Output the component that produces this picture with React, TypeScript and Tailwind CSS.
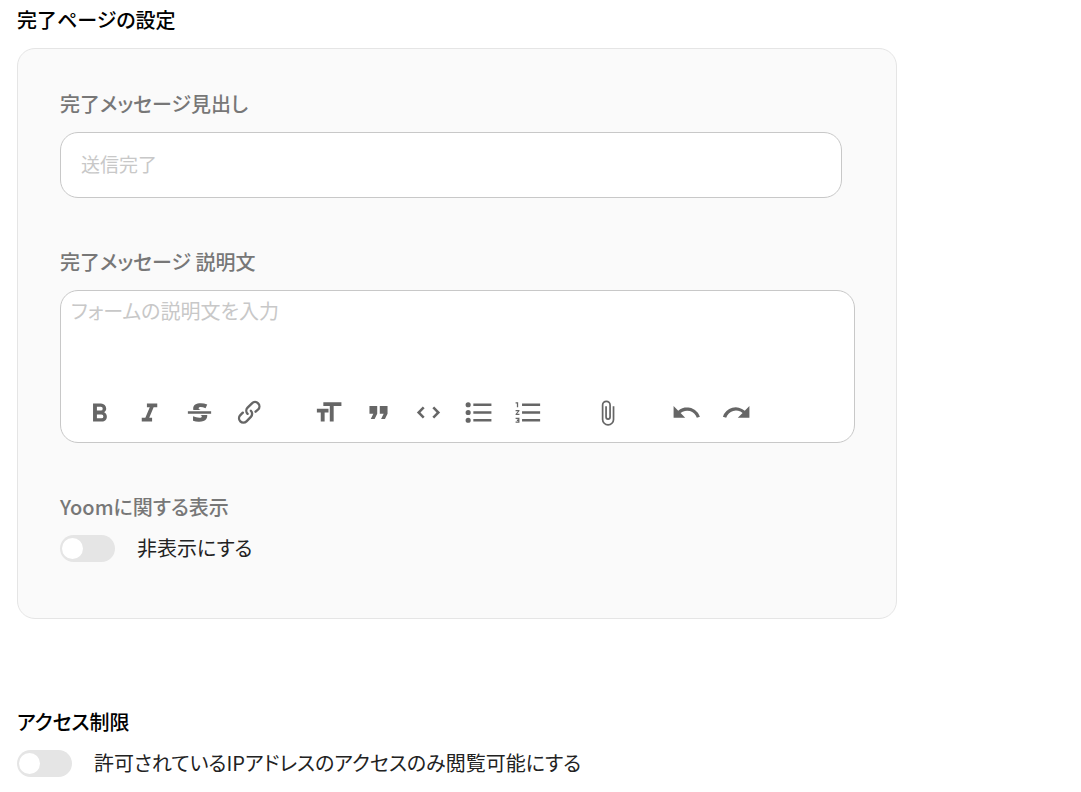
import { useId, useState } from "react"

const TOOL_GROUPS = [
  {
    name: "text",
    tools: [
      {
        label: "Bold",
        path: "M15.6 11.8c1-.7 1.6-1.8 1.6-2.8a4 4 0 0 0-4-4H7v14h7c2.1 0 3.7-1.7 3.7-3.8 0-1.5-.8-2.8-2.1-3.4zM10 7.5h3a1.5 1.5 0 1 1 0 3h-3v-3zm3.5 9H10v-3h3.5a1.5 1.5 0 1 1 0 3z",
      },
      { label: "Italic", path: "M10 5v3h2.2l-3.4 8H6v3h8v-3h-2.2l3.4-8H18V5h-8z" },
      {
        label: "Strikethrough",
        path: "M12.73 14l.28.14c.26.15.45.3.57.44.12.14.18.3.18.5 0 .3-.15.56-.44.75-.3.2-.76.3-1.39.3A13.52 13.52 0 0 1 7 14.95v3.37a10.64 10.64 0 0 0 4.84.88c1.26 0 2.35-.19 3.28-.56.93-.37 1.64-.9 2.14-1.57s.74-1.45.74-2.32c0-.26-.02-.51-.06-.75h-5.21zm-5.5-4c-.08-.34-.12-.7-.12-1.1 0-1.29.52-2.3 1.58-3.02 1.05-.72 2.5-1.08 4.34-1.08 1.62 0 3.28.34 4.97 1l-1.3 2.93c-1.47-.6-2.73-.9-3.8-.9-.55 0-.96.08-1.2.26-.26.17-.38.38-.38.64 0 .27.16.52.48.74.17.12.53.3 1.05.53H7.23zM3 13h18v-2H3v2z",
      },
      {
        label: "Link",
        path: "M9.88 13.7a4.3 4.3 0 0 1 0-6.07l3.37-3.37a4.26 4.26 0 0 1 6.07 0 4.3 4.3 0 0 1 0 6.06l-1.96 1.72a.91.91 0 1 1-1.3-1.3l1.97-1.71a2.46 2.46 0 0 0-3.48-3.48l-3.38 3.37a2.46 2.46 0 0 0 0 3.48.91.91 0 1 1-1.3 1.3zM4.25 19.46a4.3 4.3 0 0 1 0-6.07l1.93-1.9a.91.91 0 1 1 1.3 1.3l-1.93 1.9a2.46 2.46 0 0 0 3.48 3.48l3.37-3.38c.96-.96.96-2.52 0-3.48a.91.91 0 1 1 1.3-1.3 4.3 4.3 0 0 1 0 6.07l-3.38 3.38a4.26 4.26 0 0 1-6.07 0z",
      },
    ],
  },
  {
    name: "block",
    tools: [
      { label: "Heading", path: "M12 9v3H9v7H6v-7H3V9h9zM8 4h14v3h-6v12h-3V7H8V4z" },
      { label: "Quote", path: "M6 17h3l2-4V7H5v6h3zm8 0h3l2-4V7h-6v6h3z" },
      {
        label: "Code",
        path: "M18.2 12L15 15.2l1.4 1.4L21 12l-4.6-4.6L15 8.8l3.2 3.2zM5.8 12L9 8.8 7.6 7.4 3 12l4.6 4.6L9 15.2 5.8 12z",
      },
      {
        label: "Bullets",
        path: "M4 4a2 2 0 1 0 0 4 2 2 0 0 0 0-4zm0 6a2 2 0 1 0 0 4 2 2 0 0 0 0-4zm0 6a2 2 0 1 0 0 4 2 2 0 0 0 0-4zm4 3h14v-2H8v2zm0-6h14v-2H8v2zm0-8v2h14V5H8z",
      },
      {
        label: "Numbers",
        path: "M2 17h2v.5H3v1h1v.5H2v1h3v-4H2v1zm1-9h1V4H2v1h1v3zm-1 3h1.8L2 13.1v.9h3v-1H3.2L5 10.9V10H2v1zm5-6v2h14V5H7zm0 14h14v-2H7v2zm0-6h14v-2H7v2z",
      },
    ],
  },
  {
    name: "file",
    tools: [
      {
        label: "Attach files",
        viewBox: "-1.5 -2 27 27",
        path: "M16.5 6v11.5a4 4 0 1 1-8 0V5a2.5 2.5 0 0 1 5 0v10.5a1 1 0 1 1-2 0V6H10v9.5a2.5 2.5 0 0 0 5 0V5a4 4 0 1 0-8 0v12.5a5.5 5.5 0 0 0 11 0V6h-1.5z",
      },
    ],
  },
  {
    name: "history",
    tools: [
      {
        label: "Undo",
        path: "M12.5 8c-2.6 0-5 1-6.9 2.6L2 7v9h9l-3.6-3.6A8 8 0 0 1 20 16l2.4-.8a10.5 10.5 0 0 0-10-7.2z",
      },
      {
        label: "Redo",
        path: "M18.4 10.6a10.5 10.5 0 0 0-16.9 4.6L4 16a8 8 0 0 1 12.7-3.6L13 16h9V7l-3.6 3.6z",
      },
    ],
  },
]

/**
 * Pill switch with its text on the right
 */
function Switch({ label }: { label: string }) {
  const id = useId()
  const [checked, setChecked] = useState(false)

  return (
    <div className="flex items-center gap-[22px]">
      <input
        id={id}
        type="checkbox"
        role="switch"
        checked={checked}
        onChange={(e) => setChecked(e.target.checked)}
        className="h-[27px] w-[55px] shrink-0 cursor-pointer appearance-none rounded-full bg-[#e5e5e5] px-[2px] py-[3px] transition-colors before:block before:size-[21px] before:rounded-full before:bg-white before:transition-transform checked:bg-blue-500 checked:before:translate-x-[30px]"
      />
      <label htmlFor={id} className="cursor-pointer text-[#222222]">
        {label}
      </label>
    </div>
  )
}

/**
 * Rich text box, toolbar sits under the text
 */
function RichTextEditor({ id, placeholder }: { id: string; placeholder: string }) {
  return (
    <div className="rounded-[18px] border border-[#c8c8c8] bg-white">
      <textarea
        id={id}
        placeholder={placeholder}
        className="block h-[96px] w-full resize-none bg-transparent px-[10px] pt-[6px] outline-none placeholder:text-[#c8c8c8]"
      />
      <div className="flex flex-wrap gap-[29px] px-[13px] pb-[5px]">
        {TOOL_GROUPS.map((group) => (
          <div key={group.name} className="flex">
            {group.tools.map((tool) => (
              <button
                key={tool.label}
                type="button"
                aria-label={tool.label}
                className="flex h-[50px] w-[50px] items-center justify-center rounded-lg text-[#666666] hover:bg-gray-50"
              >
                <svg
                  viewBox={"viewBox" in tool ? tool.viewBox : "0 0 24 24"}
                  className="size-[31px]"
                  fill="currentColor"
                  aria-hidden="true"
                >
                  <path d={tool.path} />
                </svg>
              </button>
            ))}
          </div>
        ))}
      </div>
    </div>
  )
}

export default function App() {
  return (
    <main className="px-[17px] pt-[6px] pb-4 font-['Noto_Sans_CJK_JP',sans-serif] text-[20px] leading-7 [font-feature-settings:'palt']">
      <section>
        <h2 className="font-medium text-black">完了ページの設定</h2>

        <div className="mt-[14px] max-w-[880px] rounded-[18px] border border-[#e5e5e5] bg-[#fafafa] pt-[41px] pr-[41px] pb-[56px] pl-[42px]">
          <label htmlFor="heading" className="block font-medium text-[#777777]">
            完了メッセージ見出し
          </label>
          <div className="mt-[14px] pr-[13px]">
            <input
              id="heading"
              type="text"
              placeholder="送信完了"
              className="h-[66px] w-full rounded-[18px] border border-[#c8c8c8] bg-white px-5 pb-1 text-[19px] outline-none placeholder:text-[#c8c8c8]"
            />
          </div>

          <label htmlFor="description" className="mt-[50px] mb-[14px] block font-medium text-[#777777]">
            完了メッセージ 説明文
          </label>
          <RichTextEditor id="description" placeholder="フォームの説明文を入力" />

          <h3 className="mt-[50px] mb-[13px] font-medium text-[#777777]">Yoomに関する表示</h3>
          <Switch label="非表示にする" />
        </div>
      </section>

      <section className="mt-[89px]">
        <h2 className="mb-[13px] font-medium text-black">アクセス制限</h2>
        <Switch label="許可されているIPアドレスのアクセスのみ閲覧可能にする" />
      </section>
    </main>
  )
}
